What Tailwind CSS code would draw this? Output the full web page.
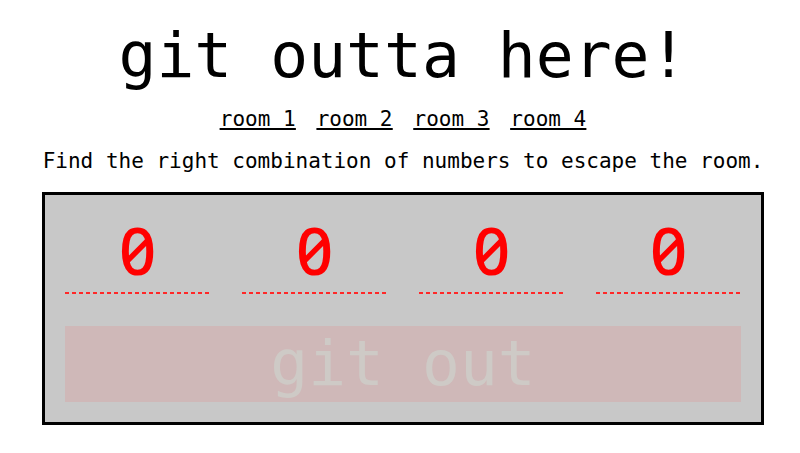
<!DOCTYPE html>
<html lang="en">
<head>
<meta charset="utf-8">
<meta name="viewport" content="width=device-width, initial-scale=1">
<title>git outta here!</title>
<script src="https://cdn.jsdelivr.net/npm/@tailwindcss/browser@4"></script>
</head>
<body class="bg-white text-black font-['DejaVu_Sans_Mono',monospace]">
<main class="mx-auto w-full max-w-[728px] pt-5 pl-[6px] text-center">
  <h1 class="text-[63px] leading-[72px]">git outta here!</h1>
  <nav class="mt-[13px] flex justify-center gap-[21px] text-[21px] leading-7 underline decoration-2 underline-offset-2">
    <a href="#room1">room 1</a>
    <a href="#room2">room 2</a>
    <a href="#room3">room 3</a>
    <a href="#room4">room 4</a>
  </nav>
  <p class="mt-[14px] text-[21px] leading-7">Find the right combination of numbers to escape the room.</p>
  <form class="mt-[17px] border-3 border-black bg-[#c8c8c8] p-5">
    <div class="grid grid-cols-4 gap-8">
      <input aria-label="First number" value="0" class="h-[79px] w-full min-w-0 bg-[repeating-linear-gradient(90deg,#ff2828_0_4px,transparent_4px_7px)] bg-[length:100%_2px] bg-bottom bg-no-repeat pb-2 text-center font-['Noto_Sans',sans-serif] text-[65px] font-medium slashed-zero text-[#ff0000]">
      <input aria-label="Second number" value="0" class="h-[79px] w-full min-w-0 bg-[repeating-linear-gradient(90deg,#ff2828_0_4px,transparent_4px_7px)] bg-[length:100%_2px] bg-bottom bg-no-repeat pb-2 text-center font-['Noto_Sans',sans-serif] text-[65px] font-medium slashed-zero text-[#ff0000]">
      <input aria-label="Third number" value="0" class="h-[79px] w-full min-w-0 bg-[repeating-linear-gradient(90deg,#ff2828_0_4px,transparent_4px_7px)] bg-[length:100%_2px] bg-bottom bg-no-repeat pb-2 text-center font-['Noto_Sans',sans-serif] text-[65px] font-medium slashed-zero text-[#ff0000]">
      <input aria-label="Fourth number" value="0" class="h-[79px] w-full min-w-0 bg-[repeating-linear-gradient(90deg,#ff2828_0_4px,transparent_4px_7px)] bg-[length:100%_2px] bg-bottom bg-no-repeat pb-2 text-center font-['Noto_Sans',sans-serif] text-[65px] font-medium slashed-zero text-[#ff0000]">
    </div>
    <button type="button" disabled class="mt-8 block w-full bg-[#cfb8b8] text-[63px] leading-[76px] text-[#cecac6]">git out</button>
  </form>
</main>
</body>
</html>
